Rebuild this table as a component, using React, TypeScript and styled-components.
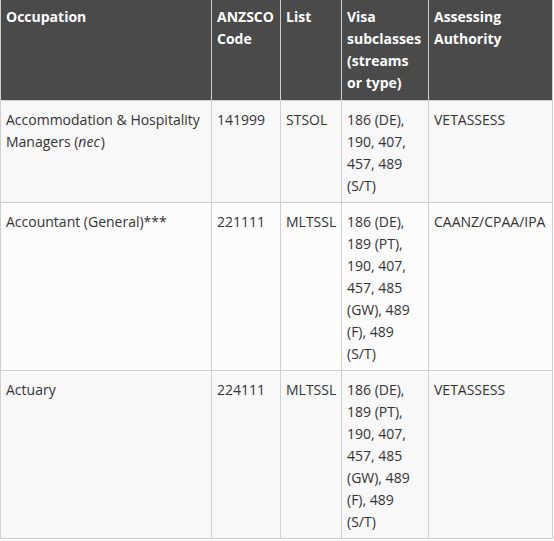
import React from "react";
import styled, { createGlobalStyle } from "styled-components";

const Global = createGlobalStyle`
  html, body { margin: 0; padding: 0; background: #fff; }
  body { font-family: "Open Sans", "Liberation Sans", sans-serif; }
`;

const Table = styled.table`
  border-collapse: collapse;
  table-layout: fixed;
  width: 552px;
  font-family: "Open Sans", "Liberation Sans", sans-serif;
  font-size: 14px;
  line-height: 22px;
  color: #333;
`;

const Th = styled.th`
  background: #4a4a4a;
  color: #fff;
  font-weight: 700;
  text-align: left;
  vertical-align: top;
  padding: 6px 5px 6px 5px;
  border: 1px solid #cfcfcf;
  border-top: none;
`;

const Tr = styled.tr<{ $shade?: boolean }>`
  background: ${(p) => (p.$shade ? "#f8f8f8" : "#fcfcfc")};
`;

const Td = styled.td`
  vertical-align: top;
  padding: 8px 5px 5px 5px;
  border: 1px solid #cfcfcf;
  word-wrap: normal;
`;

const Nec = styled.i`
  padding-right: 1px;
`;

const rows = [
  {
    occ: (
      <>
        Accommodation &amp; Hospitality Managers (<Nec>nec</Nec>)
      </>
    ),
    code: "141999",
    list: "STSOL",
    visa: "186 (DE), 190, 407, 457, 489 (S/T)",
    auth: "VETASSESS",
  },
  {
    occ: <>Accountant (General)***</>,
    code: "221111",
    list: "MLTSSL",
    visa: "186 (DE), 189 (PT), 190, 407, 457, 485 (GW), 489 (F), 489 (S/T)",
    auth: "CAANZ/CPAA/IPA",
  },
  {
    occ: <>Actuary</>,
    code: "224111",
    list: "MLTSSL",
    visa: "186 (DE), 189 (PT), 190, 407, 457, 485 (GW), 489 (F), 489 (S/T)",
    auth: "VETASSESS",
  },
];

export default function App() {
  return (
    <>
      <Global />
      <Table>
        <colgroup>
          <col style={{ width: 211 }} />
          <col style={{ width: 69 }} />
          <col style={{ width: 61 }} />
          <col style={{ width: 87 }} />
          <col style={{ width: 124 }} />
        </colgroup>
        <thead>
          <tr>
            <Th>Occupation</Th>
            <Th>ANZSCO Code</Th>
            <Th>List</Th>
            <Th>Visa subclasses (streams or type)</Th>
            <Th>Assessing Authority</Th>
          </tr>
        </thead>
        <tbody>
          {rows.map((r, i) => (
            <Tr key={i} $shade={i % 2 === 0}>
              <Td>{r.occ}</Td>
              <Td>{r.code}</Td>
              <Td>{r.list}</Td>
              <Td>{r.visa}</Td>
              <Td>{r.auth}</Td>
            </Tr>
          ))}
        </tbody>
      </Table>
    </>
  );
}
